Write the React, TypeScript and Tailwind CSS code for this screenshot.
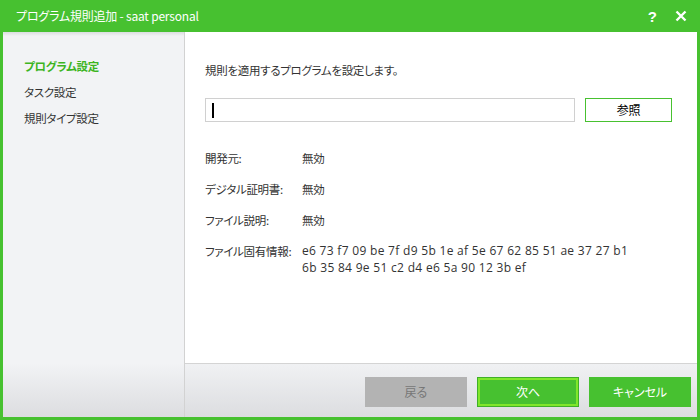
import React from 'react';

const font = "[font-family:'Noto_Sans_CJK_JP','Noto_Sans',sans-serif] [font-feature-settings:'palt']";
const latin = "[font-family:'Open_Sans','Noto_Sans_CJK_JP',sans-serif]";

const infoRows: { label: string; value: React.ReactNode }[] = [
  { label: '開発元:', value: '無効' },
  { label: 'デジタル証明書:', value: '無効' },
  { label: 'ファイル説明:', value: '無効' },
  {
    label: 'ファイル固有情報:',
    value: (
      <div className={`${latin} text-[12px] tracking-[0.3px] leading-[16.5px]`}>
        <div>e6 73 f7 09 be 7f d9 5b 1e af 5e 67 62 85 51 ae 37 27 b1</div>
        <div>6b 35 84 9e 51 c2 d4 e6 5a 90 12 3b ef</div>
      </div>
    ),
  },
];

export default function App() {
  return (
    <div className={`w-[700px] h-[420px] bg-[#47c130] flex flex-col overflow-hidden ${font}`}>
      {/* title bar */}
      <div className="h-[32px] flex items-center pl-[16px] pr-[12px] text-white shrink-0">
        <span className="text-[12px] leading-none tracking-[-0.2px]">プログラム規則追加 - saat personal</span>
        <div className="ml-auto flex items-center gap-[18px]">
          <span className="text-[15px] font-bold leading-none [font-family:'Liberation_Sans',sans-serif]">?</span>
          <svg width="12" height="12" viewBox="0 0 12 12" className="mr-[1px]">
            <path d="M1.5 1.5 L10.5 10.5 M10.5 1.5 L1.5 10.5" stroke="white" strokeWidth="2.4" />
          </svg>
        </div>
      </div>

      <div className="flex-1 flex mx-[3px] mb-[3px] min-h-0">
        {/* sidebar */}
        <div className="w-[182px] flex flex-col border-r border-[#d2d2d2] bg-[#f2f3f5] shrink-0">
          <div className="h-[4px] bg-gradient-to-b from-[#dcdde0] to-[#f2f3f5]" />
          <div className="flex-1 pt-[18px] pl-[21px] text-[11.5px] tracking-[-0.3px] text-[#333]">
            <div className="h-[26px] flex items-center font-bold text-[#3db51f]">プログラム設定</div>
            <div className="h-[26px] flex items-center">タスク設定</div>
            <div className="h-[26px] flex items-center">規則タイプ設定</div>
          </div>
          <div className="h-[54px] bg-gradient-to-b from-[#f2f3f5] to-[#dcdde0]" />
        </div>

        {/* main */}
        <div className="flex-1 flex flex-col bg-white">
          <div className="flex-1 pt-[28px] pl-[20px] pr-[25px] text-[11.5px] tracking-[-0.3px] text-[#333]">
            <div className="leading-[20px]">規則を適用するプログラムを設定します。</div>
            <div className="mt-[18px] flex gap-[10px] h-[24px]">
              <div className="flex-1 border border-[#d0d0d0] flex items-center pl-[6px]">
                <div className="w-[1.5px] h-[15px] bg-black" />
              </div>
              <button className="w-[87px] border border-[#47c130] bg-white text-[12px] text-black">参照</button>
            </div>
            <div className="mt-[28px] flex flex-col gap-[15px] leading-[16px]">
              {infoRows.map((r) => (
                <div key={r.label} className="flex">
                  <div className="w-[97px] shrink-0">{r.label}</div>
                  <div>{r.value}</div>
                </div>
              ))}
            </div>
          </div>

          {/* footer */}
          <div className="h-[54px] border-t border-[#d4d4d4] bg-gradient-to-b from-[#f0f1f3] to-[#dcdde0] flex items-start justify-end gap-[10px] pt-[13px] pr-[6px] text-[12px]">
            <button className="w-[102px] h-[30px] bg-[#b3b3b3] text-[#777]">戻る</button>
            <button className="w-[102px] h-[30px] bg-[#47c130] text-white border border-[#3fb028] ring-2 ring-inset ring-[#80e62b]">次へ</button>
            <button className="w-[102px] h-[30px] bg-[#47c130] text-white">キャンセル</button>
          </div>
        </div>
      </div>
    </div>
  );
}
